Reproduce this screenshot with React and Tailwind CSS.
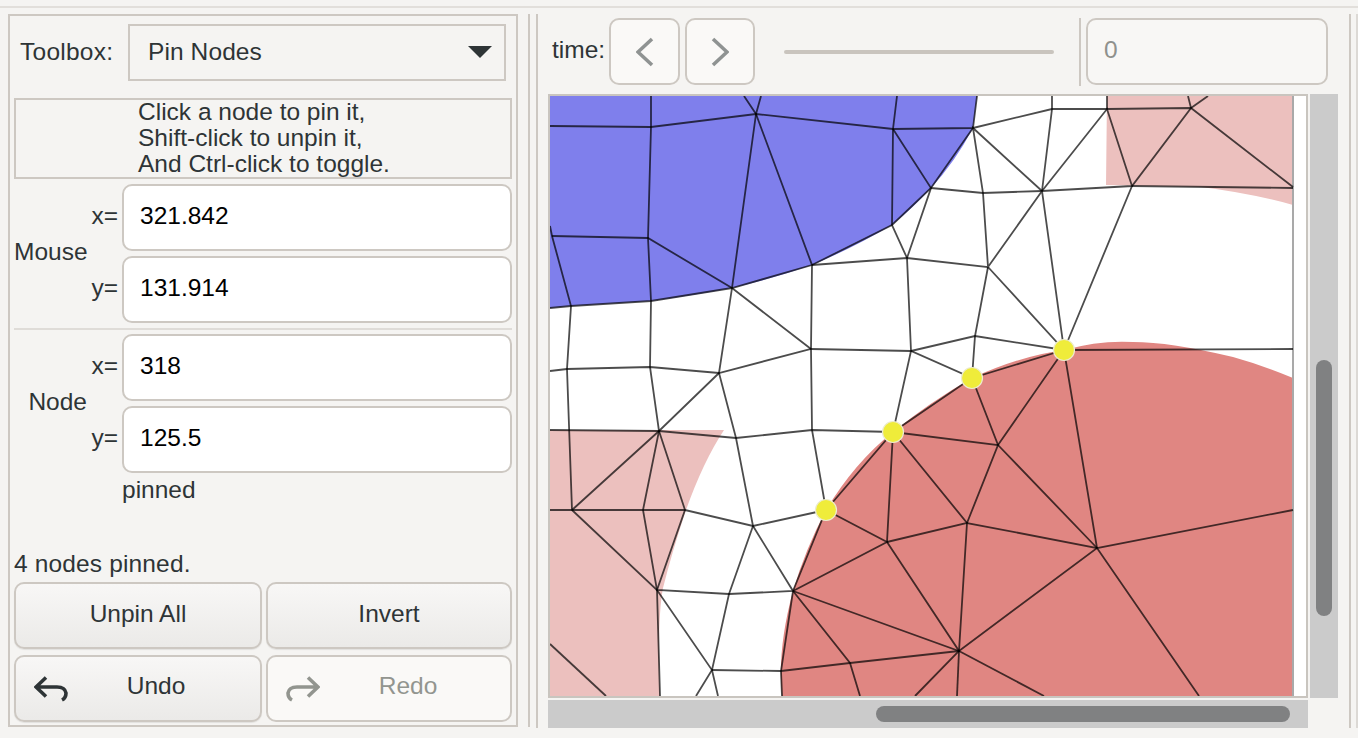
import React from "react";

const F = "font-['Liberation_Sans',Arial,sans-serif]";

// mesh edges as polylines, in page coordinates
const lines = [
  [[550,126],[651,127],[756,114],[893,129],[973,128],[1052,109],[1107,109],[1191,108],[1293,187]],
  [[651,96],[651,127],[648,238],[651,301],[650,367],[659,431],[643,510],[657,590],[660,696]],
  [[744,96],[756,114],[732,288],[719,373],[736,438],[753,526],[729,594],[712,670],[696,696]],
  [[761,96],[756,114],[812,265],[811,349],[812,430],[826,510],[793,591],[781,671],[782,696]],
  [[897,96],[893,129],[892,225],[907,258],[911,351],[893,432],[887,542],[959,651],[915,696]],
  [[893,129],[931,188],[907,258]],
  [[550,226],[552,236],[571,306],[567,369],[572,510],[657,590],[712,670],[718,696]],
  [[552,236],[648,238],[732,288],[811,349]],
  [[550,308],[571,306],[651,301],[732,288],[812,265],[892,225],[931,188],[973,128],[977,96]],
  [[550,371],[567,369],[650,367],[719,373],[811,349],[911,351],[972,378],[893,432],[826,510]],
  [[812,265],[907,258],[988,267],[1064,350],[1042,191],[973,128],[983,193],[988,267],[1042,191],[1107,109],[1132,186],[1064,350]],
  [[931,188],[983,193],[1042,191],[1132,186],[1191,108],[1188,96]],
  [[1132,186],[1293,188]],
  [[1191,108],[1208,96]],
  [[1052,96],[1052,109],[1042,191]],
  [[1107,96],[1107,109]],
  [[911,351],[975,336],[1064,350],[1293,349]],
  [[988,267],[975,336],[972,378],[1064,350]],
  [[550,430],[659,431],[736,438],[812,430],[893,432]],
  [[719,373],[659,431],[572,510],[550,510]],
  [[572,510],[643,510],[685,510],[753,526],[826,510]],
  [[659,431],[685,510],[657,590],[729,594],[793,591],[753,526]],
  [[712,670],[781,671],[850,663],[959,651]],
  [[550,644],[606,696]],
  [[793,591],[887,542],[826,510]],
  [[793,591],[959,651],[1097,548],[1293,510]],
  [[793,591],[850,663],[860,696]],
  [[959,651],[957,696]],
  [[959,651],[1044,696]],
  [[959,651],[967,523],[1097,548],[1199,696]],
  [[887,542],[967,523],[893,432],[998,445],[1097,548]],
  [[967,523],[998,445],[972,378]],
  [[998,445],[1064,350],[1097,548]],
];

const pins = [[826,510],[893,432],[972,378],[1064,350]];

const toPath = (pts) => pts.map((p, i) => (i ? "L" : "M") + p[0] + " " + p[1]).join(" ");

function Mesh() {
  return (
    <svg className="block" width="756" height="600" viewBox="550 96 756 600">
      <defs>
        <filter id="soft" x="-2%" y="-2%" width="104%" height="104%">
          <feGaussianBlur stdDeviation="0.45" />
        </filter>
      </defs>
      <rect x="550" y="96" width="756" height="600" fill="#ffffff" />
      <path fill="#7f7fec" d="M550 96H977L973 128Q955 162 931 188Q913 208 892 225Q853 248 812 265Q772 279 732 288Q690 296 651 301L571 306L550 308Z" />
      <path fill="#ecc0be" d="M1107 96H1293V205Q1250 193 1201 187L1106 185Z" />
      <path fill="#ecc0be" d="M550 430H724Q703 462 686 510Q672 552 663 588Q657 620 660 696H550Z" />
      <path fill="#e08682" d="M782 696Q777 650 793 591Q805 550 826 510Q855 462 893 432Q930 402 972 378Q1020 356 1064 350Q1100 340 1133 342Q1170 342 1233 357Q1265 366 1293 378V696Z" />
      <rect x="1292" y="96" width="2" height="600" fill="#a9a9a9" />
      <g filter="url(#soft)" fill="none" stroke="#000000" strokeOpacity="0.7" strokeWidth="1.8">
        {lines.map((l, i) => (
          <path key={i} d={toPath(l)} />
        ))}
      </g>
      {pins.map((p, i) => (
        <circle key={i} cx={p[0]} cy={p[1]} r="10.5" fill="#efec3a" stroke="#ecebd0" strokeWidth="1.2" />
      ))}
    </svg>
  );
}

function Field({ label, value }) {
  return (
    <div className="flex items-center h-[67px]">
      <span className="w-[36px] pr-[4px] pb-[3px] text-right">{label}</span>
      <input
        readOnly
        value={value}
        className="w-[390px] h-[67px] rounded-[10px] border-2 border-[#cdc8c2] bg-white pl-[16px] pb-[4px] pt-0 text-black outline-none"
      />
    </div>
  );
}

function Group({ name, xv, yv }) {
  return (
    <div className="flex items-center">
      <span className="w-[73px] pb-[4px] text-right">{name}</span>
      <div className="flex flex-col gap-[5px] -ml-[1px]">
        <Field label="x=" value={xv} />
        <Field label="y=" value={yv} />
      </div>
    </div>
  );
}

function ArrowIcon({ flip, color }) {
  return (
    <svg width="34" height="26" viewBox="0 0 34 26" className={flip ? "-scale-x-100" : ""}>
      <path d="M12 1.5 L2 11 L12 20.5 M2 11 H23 Q31 11 32 17 Q32 22 28 24" fill="none" stroke={color} strokeWidth="3.6" />
    </svg>
  );
}

const btn = "h-[67px] rounded-[10px] border-2 border-[#cdc8c2] flex items-center";
const raised = "bg-gradient-to-b from-[#f8f7f6] to-[#ebeae8] shadow-[0_1px_1px_rgba(0,0,0,0.08)]";

export default function App() {
  return (
    <div className={`w-[1358px] h-[738px] overflow-hidden bg-[#f5f4f2] text-[#2e3436] text-[24.5px] leading-[26px] ${F}`}>
      <div className="h-[8px] border-b-2 border-[#e2dfdb]"></div>
      <div className="flex mt-[6px]">
        {/* left panel */}
        <div className="ml-[8px] w-[510px] h-[713px] border-2 border-[#cdc8c2] px-[4px] flex flex-col shrink-0">
          <div className="flex items-center mt-[8px] h-[57px]">
            <span className="ml-[6px] w-[108px] pb-[2px] tracking-[0.25px]">Toolbox:</span>
            <div className="w-[378px] h-[57px] border-2 border-[#cdc8c2] flex items-center justify-between pl-[18px] pr-[12px] pb-[2px]">
              <span className="tracking-[0.1px]">Pin Nodes</span>
              <svg width="24" height="12" viewBox="0 0 24 12">
                <path d="M0 0H24L12 12Z" fill="#2e3436" />
              </svg>
            </div>
          </div>
          <div className="mt-[17px] h-[81px] border-2 border-[#cdc8c2] pl-[122px] -mb-[1px] leading-[26px] pt-0">
            <div className="-mt-[1px]">Click a node to pin it,</div>
            <div>Shift-click to unpin it,</div>
            <div>And Ctrl-click to toggle.</div>
          </div>
          <div className="mt-[6px]">
            <Group name="Mouse" xv="321.842" yv="131.914" />
          </div>
          <div className="mt-[5px] h-[2px] bg-[#dfdcd8]"></div>
          <div className="mt-[4px]">
            <Group name="Node" xv="318" yv="125.5" />
          </div>
          <div className="mt-[4px] ml-[108px]">pinned</div>
          <div className="mt-[48px] tracking-[0.15px]">4 nodes pinned.</div>
          <div className="mt-[5px] grid grid-cols-[248px_246px] gap-x-[4px] gap-y-[6px]">
            <div className={`${btn} ${raised} justify-center pb-[4px]`}>Unpin All</div>
            <div className={`${btn} ${raised} justify-center pb-[4px]`}>Invert</div>
            <div className={`${btn} ${raised} pl-[18px]`}>
              <ArrowIcon color="#2e3436" />
              <span className="flex-1 text-center pr-[16px] pb-[6px]">Undo</span>
            </div>
            <div className={`${btn} bg-[#faf9f7] text-[#92958f] pl-[18px]`}>
              <ArrowIcon flip color="#92958f" />
              <span className="flex-1 text-center pr-[14px] pb-[6px]">Redo</span>
            </div>
          </div>
        </div>

        <div className="ml-[10px] w-[2px] h-[713px] bg-[#cdc8c2] shrink-0"></div>

        {/* right panel */}
        <div className="ml-[6px] w-[815px] h-[714px] border-x-2 border-[#cdc8c2] shrink-0">
          <div className="flex items-center mt-[4px] h-[67px] pl-[14px]">
            <span className="w-[57px] pb-[4px]">time:</span>
            <div className={`${btn} w-[71px] bg-[#faf9f7] justify-center`}>
              <svg width="18" height="30" viewBox="0 0 18 30">
                <path d="M16 2 L2 15 L16 28" fill="none" stroke="#8f9392" strokeWidth="3.6" />
              </svg>
            </div>
            <div className={`${btn} w-[70px] ml-[5px] bg-[#faf9f7] justify-center`}>
              <svg width="18" height="30" viewBox="0 0 18 30">
                <path d="M2 2 L16 15 L2 28" fill="none" stroke="#8f9392" strokeWidth="3.6" />
              </svg>
            </div>
            <div className="ml-[29px] w-[270px] h-[4px] rounded-full bg-[#c9c4be]"></div>
            <div className="ml-[25px] w-[2px] h-[68px] bg-[#cdc8c2]"></div>
            <div className={`${btn} w-[242px] ml-[5px] bg-[#f8f7f5] text-[#8f918d] pl-[16px] pb-[4px]`}>0</div>
          </div>
          <div className="flex mt-[9px] ml-[10px]">
            <div className="w-[760px] h-[604px] border-2 border-[#c9c5bf] bg-white">
              <Mesh />
            </div>
            <div className="ml-[2px] w-[28px] h-[604px] bg-[#cbcbcb] pt-[266px] pl-[6px]">
              <div className="w-[16px] h-[256px] rounded-full bg-[#808182]"></div>
            </div>
          </div>
          <div className="ml-[10px] mt-[2px] w-[760px] h-[28px] bg-[#cbcbcb] pt-[6px] pl-[328px]">
            <div className="w-[414px] h-[16px] rounded-full bg-[#808182]"></div>
          </div>
        </div>

        <div className="ml-[5px] w-[2px] h-[714px] bg-[#dcd9d5] shrink-0"></div>
      </div>
    </div>
  );
}
